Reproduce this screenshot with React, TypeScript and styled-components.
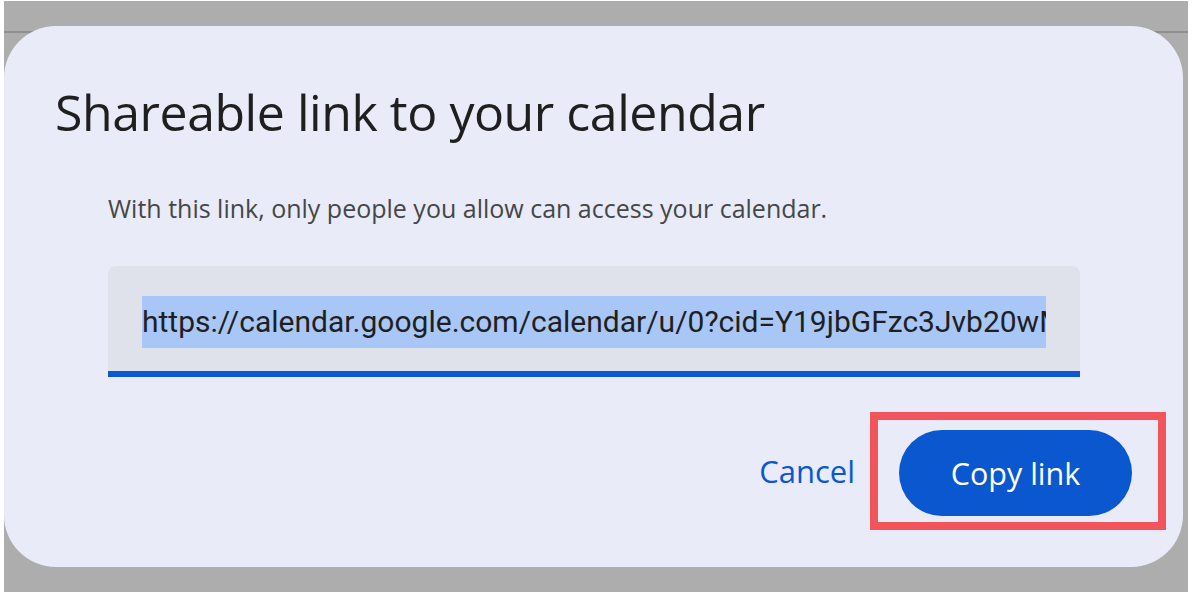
import React from "react";
import styled, { createGlobalStyle } from "styled-components";

const Global = createGlobalStyle`
  html, body { margin: 0; padding: 0; background: #ffffff; }
  body { font-family: "Open Sans", "Noto Sans", sans-serif; }
  * { box-sizing: border-box; }
`;

const Backdrop = styled.div`
  width: 1184px;
  height: 591px;
  margin: 1px 0 0 4px;
  padding: 25px 5px 25px 0;
  background:
    linear-gradient(#8f8f8f, #8f8f8f) 0 30px / 100% 2px no-repeat,
    #adadad;
`;

const Dialog = styled.div`
  height: 100%;
  background: #e9ebf8;
  border-radius: 52px;
  padding: 56px 17px 37px 0;
  display: flex;
  flex-direction: column;
`;

const Title = styled.h1`
  margin: 0 0 51px 51px;
  font-family: "Open Sans", "Noto Sans", sans-serif;
  font-weight: 400;
  font-size: 50px;
  line-height: 60px;
  color: #1f1f1f;
  letter-spacing: -0.45px;
`;

const Description = styled.p`
  margin: 0 0 43px 104px;
  font-family: "Open Sans", "Noto Sans", sans-serif;
  font-size: 25px;
  line-height: 30px;
  color: #444746;
`;

const LinkField = styled.div`
  margin: 0 86px 35px 104px;
  height: 111px;
  padding: 30px 34px 23px 34px;
  background: #dfe2eb;
  border-radius: 8px 8px 0 0;
  border-bottom: 6px solid #0b57d0;
`;

const SelectedText = styled.div`
  height: 52px;
  line-height: 52px;
  background: #a8c7f7;
  overflow: hidden;
  white-space: nowrap;
  font-family: Roboto, "Liberation Sans", sans-serif;
  font-size: 30px;
  color: #1f1f1f;
`;

const Actions = styled.div`
  display: flex;
  justify-content: flex-end;
  align-items: center;
  gap: 15px;
`;

const TextButton = styled.button`
  border: none;
  background: none;
  padding: 0;
  font-family: "Open Sans", "Noto Sans", sans-serif;
  font-weight: 500;
  font-size: 31px;
  color: #0b57d0;
  cursor: pointer;
`;

const Highlight = styled.div`
  border: 8px solid #f2545c;
  padding: 10px 26px 6px 21px;
  display: flex;
`;

const FilledButton = styled.button`
  width: 233px;
  height: 86px;
  border: none;
  border-radius: 43px;
  background: #0b57d0;
  color: #ffffff;
  font-family: "Open Sans", "Noto Sans", sans-serif;
  font-weight: 500;
  font-size: 30.5px;
  cursor: pointer;
`;

export default function App() {
  return (
    <>
      <Global />
      <Backdrop>
        <Dialog>
          <Title>Shareable link to your calendar</Title>
          <Description>
            With this link, only people you allow can access your calendar.
          </Description>
          <LinkField>
            <SelectedText>
              https://calendar.google.com/calendar/u/0?cid=Y19jbGFzc3Jvb20wMjQ5NTQ
            </SelectedText>
          </LinkField>
          <Actions>
            <TextButton>Cancel</TextButton>
            <Highlight>
              <FilledButton>Copy link</FilledButton>
            </Highlight>
          </Actions>
        </Dialog>
      </Backdrop>
    </>
  );
}
